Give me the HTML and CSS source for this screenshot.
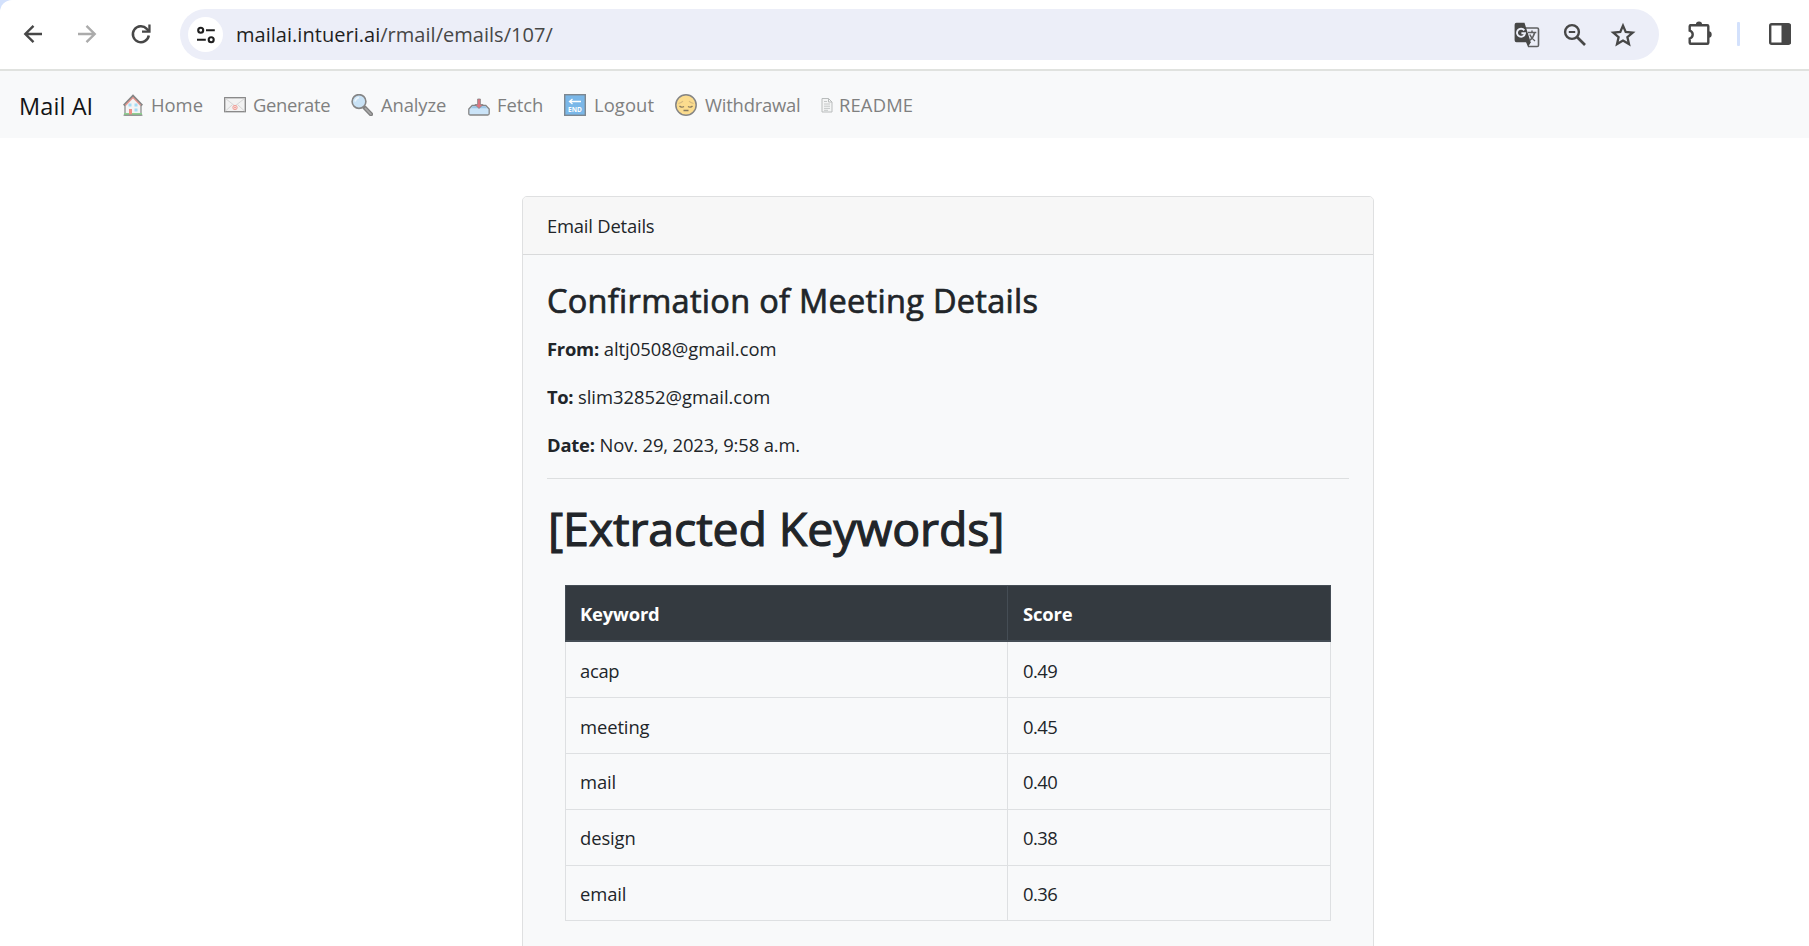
FILE: index.html
```
<!DOCTYPE html>
<html lang="en">
<head>
<meta charset="utf-8">
<title>Mail AI</title>
<link rel="stylesheet" href="styles.css">
</head>
<body>
<div class="frame">
<header class="toolbar">
  <div class="controls">
    <svg class="ctl" viewBox="0 0 24 24"><path d="M21 12H4.500M12.500 3.800L4.300 12l8.200 8.200" fill="none" stroke="#474747" stroke-width="2.400"/></svg>
    <svg class="ctl" viewBox="0 0 24 24"><path d="M3 12h16.500M11.500 3.800l8.200 8.200-8.200 8.200" fill="none" stroke="#ababab" stroke-width="2.400"/></svg>
    <svg class="ctl" viewBox="0 0 24 24"><path d="M19.800 13.500A8 8 0 1 1 17.800 6.800L20 9" fill="none" stroke="#474747" stroke-width="2.500"/><path d="M13 10.700h8.600V2.600h-2.300v5.800H13z" fill="#474747"/></svg>
  </div>
  <div class="omnibox">
    <span class="tune"><svg width="20" height="20" viewBox="0 0 20 20" fill="none" stroke="#1f1f1f" stroke-width="2.100"><circle cx="4.700" cy="5.200" r="2.500"/><path d="M10 5.200h8.800M1 14.800h8.800"/><circle cx="15.200" cy="14.800" r="2.500"/></svg></span>
    <span class="url"><span class="host">mailai.intueri.ai</span>/rmail/emails/107/</span>
    <span class="actions">
      <svg width="26" height="26" viewBox="0 0 26 26"><path d="M12 6h11.200q1.300 0 1.300 1.300v15.900q0 1.300-1.300 1.300H14" fill="none" stroke="#5f6062" stroke-width="1.600"/><path d="M2.500.8h8l6.200 19.400h-4.400H2.500Q.6 20.200.6 18.300V2.700Q.6.800 2.500.8z" fill="#474747"/><path d="M12 20h5l-3 5z" fill="#474747"/><path d="M10.300 8.400A4 4 0 1 0 11 11.300H7.400" fill="none" stroke="#eceef8" stroke-width="1.900"/><path d="M14 10.500h8.300M18 8.600v2M20.600 10.700q-1.200 5-5 7.800M15.800 12.500q1.500 3.800 5.200 6.500" fill="none" stroke="#5f6062" stroke-width="1.500"/></svg>
      <svg width="24" height="24" viewBox="0 0 24 24" fill="none" stroke="#474747" stroke-width="2.400"><circle cx="9" cy="9" r="6.900"/><path d="M5.800 9h6.400" stroke-width="2"/><path d="M14 14l8 8" stroke-width="2.700"/></svg>
      <svg width="26" height="26" viewBox="0 0 26 26"><path d="M13 3.600l2.700 6.400 7 .6-5.300 4.600 1.600 6.900-6-3.600-6 3.600 1.600-6.900-5.300-4.600 7-.6z" fill="none" stroke="#474747" stroke-width="2.300"/></svg>
    </span>
  </div>
  <div class="extras">
    <svg width="28" height="28" viewBox="0 0 28 28"><path d="M3.700 5.200h17.600q1 0 1 1v16.600q0 1-1 1H4.700q-1 0-1-1v-4.200q3-1 3-4t-3-4V6.200q0-1 1-1z" fill="none" stroke="#474747" stroke-width="2.400"/><path d="M9.900 4.500a3.100 3.100 0 0 1 6.200 0zM22.500 11.300a3.200 3.200 0 0 1 0 6.400z" fill="#474747"/></svg>
    <span class="divider"></span>
    <svg width="24" height="24" viewBox="0 0 24 24"><rect x="2.200" y="2.200" width="19.600" height="19.600" rx="1.500" fill="none" stroke="#474747" stroke-width="2.400"/><path d="M13.500 2h8q1.500 0 1.500 1.500v17q0 1.500-1.500 1.500h-8z" fill="#474747"/></svg>
  </div>
</header>
</div>

<nav class="navbar">
  <a class="brand">Mail AI</a>
  <a class="link home"><svg class="emoji" viewBox="0 0 22 22"><path d="M3 10.500l8-8 8 8V21H3z" fill="#f3f4f5" stroke="#858585" stroke-width="1.200"/><path d="M2 20h18" stroke="#8fce91" stroke-width="2"/><path d="M1.800 11.500L11 2l9.200 9.500" fill="none" stroke="#858585" stroke-width="2.400"/><path d="M3.500 11.200L11 3.600l7.500 7.600" fill="none" stroke="#ef9a92" stroke-width="1.300"/><path d="M6.500 9.500h3v3h-3zM12.500 9.500h3v3h-3zM12.500 14.500h3v3h-3z" fill="#a4dcf5"/><path d="M7 15h3v5.500H7z" fill="#f09086"/><path d="M1.500 21.200h19" stroke="#858585" stroke-width="1"/></svg>Home</a>
  <a class="link generate"><svg class="emoji" viewBox="0 0 22 22"><rect x=".7" y="3.700" width="20.600" height="14" fill="#f2f2f2" stroke="#858585" stroke-width="1.300"/><path d="M1.500 4.500L11 12l9.500-7.500M1.500 17l7-6.500M20.500 17l-7-6.500" fill="none" stroke="#d6d6d6"/><circle cx="11" cy="13.500" r="2.200" fill="#f8dcd9" stroke="#f0a29a" stroke-width="1"/><circle cx="11" cy="13.500" r=".8" fill="#ef8f86"/></svg>Generate</a>
  <a class="link analyze"><svg class="emoji" viewBox="0 0 22 22"><path d="M13.500 13.500l6.500 6.700" stroke="#808080" stroke-width="4.200" stroke-linecap="round"/><path d="M14.500 14.500l5.300 5.500" stroke="#a9a9a9" stroke-width="1.800" stroke-linecap="round"/><circle cx="8" cy="7.500" r="6.900" fill="#c9e2f5" stroke="#858585" stroke-width="1.600"/><path d="M4 7.500q.8-3.300 4-4" fill="none" stroke="#edf6fc" stroke-width="1.500"/></svg>Analyze</a>
  <a class="link fetch"><svg class="emoji" viewBox="0 0 22 22"><path d="M4.200 11.500h13.600l3.400 3.500v4.500q0 1.500-1.500 1.500H2.300q-1.500 0-1.500-1.500V15z" fill="#cbe4f8" stroke="#858585" stroke-width="1.300"/><path d="M4.700 12.200h12.600l1.700 2H3z" fill="#9cc7e8"/><path d="M9.600 5h2.800v5.500H15l-4 4-4-4h2.600z" fill="#df7480" stroke="#858585" stroke-width=".8"/></svg>Fetch</a>
  <a class="link logout"><svg class="emoji" viewBox="0 0 22 22"><rect x=".7" y=".7" width="20.600" height="20.600" fill="#7ab7e8" stroke="#7d8790" stroke-width="1.400"/><path d="M5.500 7.500H17M8.500 5l-3 2.500 3 2.500" fill="none" stroke="#fff" stroke-width="1.300"/><text class="end" x="11" y="18" text-anchor="middle">END</text></svg>Logout</a>
  <a class="link withdrawal"><svg class="emoji" viewBox="0 0 22 22"><circle cx="11" cy="11" r="10.200" fill="#fbdc8e" stroke="#858585" stroke-width="1.500"/><path d="M3.500 9.500q3-.5 4.500-2.300M18.500 9.500q-3-.5-4.500-2.300" fill="none" stroke="#d4b980" stroke-width="1.100"/><path d="M4.500 12q2 2 4.500.5M17.500 12q-2 2-4.500.5M8.500 16.500h5" fill="none" stroke="#85795f" stroke-width="1.400"/></svg>Withdrawal</a>
  <a class="link readme"><svg class="emoji page" viewBox="0 0 12 22"><path d="M1 4.500h6.500L11 8v10H1zM7.500 4.500V8H11" fill="#f4f5f5" stroke="#b9bcbc" stroke-width="1"/><path d="M3 7.500h3M3 10h6M3 12.200h6M3 14.400h6M3 16.300h4" stroke="#c0c3c3" stroke-width=".9"/></svg>README</a>
</nav>

<main class="card">
  <div class="card-header">Email Details</div>
  <div class="card-body">
    <h2 class="subject">Confirmation of Meeting Details</h2>
    <p class="meta"><strong class="from">From:</strong> <span>altj0508@gmail.com</span></p>
    <p class="meta"><strong class="to">To:</strong> <span>slim32852@gmail.com</span></p>
    <p class="meta"><strong class="date">Date:</strong> <span class="when">Nov. 29, 2023, 9:58 a.m.</span></p>
    <hr class="rule">
    <h1 class="title">[Extracted Keywords]</h1>
    <table class="keywords">
      <colgroup><col class="col-key"><col></colgroup>
      <thead><tr><th>Keyword</th><th>Score</th></tr></thead>
      <tbody>
        <tr><td class="acap">acap</td><td class="score">0.49</td></tr>
        <tr><td>meeting</td><td class="score">0.45</td></tr>
        <tr class="tight"><td>mail</td><td class="score">0.40</td></tr>
        <tr class="tight"><td>design</td><td class="score">0.38</td></tr>
        <tr class="tight"><td>email</td><td class="score">0.36</td></tr>
      </tbody>
    </table>
  </div>
</main>
</body>
</html>
```
FILE: styles.css
```
* { box-sizing: border-box; }
html { height: 100%; overflow: hidden; }
body {
  margin: 0;
  height: 100%;
  overflow: hidden;
  background: #fff;
  color: #212529;
  font: 18.4px/28.8px "Open Sans", "Noto Sans", sans-serif;
}
svg { display: block; flex: none; }

.frame { background: #d3e1fc; }
.toolbar {
  display: flex;
  align-items: center;
  height: 71px;
  padding: 0 17px 2px 21px;
  background: #fff;
  border-bottom: 2px solid #e0e2df;
  border-top-left-radius: 12px;
}
.controls { display: flex; gap: 30px; width: 159px; }
.ctl { width: 24px; height: 24px; }
.omnibox {
  display: flex;
  align-items: center;
  flex: none;
  width: 1479px;
  height: 51px;
  margin-top: 2px;
  padding: 0 23px 0 8px;
  border-radius: 26px;
  background: #eceef8;
}
.tune {
  display: grid;
  place-items: center;
  width: 35px;
  height: 35px;
  border-radius: 50%;
  background: #fff;
}
.url { margin-left: 13px; padding-top: 2px; font-size: 20px; letter-spacing: 0.03px; color: #474747; white-space: nowrap; }
.host { color: #1f1f1f; }
.actions { display: flex; align-items: center; gap: 23px; margin-left: auto; }
.extras { display: flex; align-items: center; margin-left: 27px; }
.divider { width: 3px; height: 24px; margin: 0 28px 0 23px; border-radius: 1px; background: #d3e1fc; }

.navbar {
  display: flex;
  align-items: center;
  height: 67px;
  padding-left: 19px;
  background: #f8f9fa;
  color: #7f8080;
}
.brand { width: 104px; padding-top: 3px; font-size: 23.5px; letter-spacing: 0.1px; color: #121416; }
.link { display: flex; align-items: center; gap: 6px; padding-top: 2px; white-space: nowrap; }
.emoji { width: 22px; height: 22px; }
.home .emoji { margin-left: -1px; }
.page { width: 12px; }
.end { font: 700 6.5px "Open Sans", sans-serif; fill: #fff; }
.home { width: 101px; gap: 7px; letter-spacing: 0; }
.generate { width: 127px; gap: 7px; letter-spacing: -0.35px; }
.analyze { width: 117px; gap: 8px; letter-spacing: -0.1px; }
.fetch { width: 96px; gap: 7px; letter-spacing: -0.05px; }
.logout { width: 111px; gap: 8px; letter-spacing: 0.1px; }
.withdrawal { width: 146px; gap: 8px; letter-spacing: -0.2px; }
.readme { letter-spacing: 0.15px; }

.card {
  width: 852px;
  height: 780px;
  margin: 58px 0 0 522px;
  border: 1px solid #dfe0e1;
  border-radius: 5px 5px 0 0;
  background: #f8f9fa;
}
.card-header {
  height: 58px;
  padding: 0 24px;
  line-height: 57px;
  letter-spacing: -0.2px;
  background: #f7f7f7;
  border-bottom: 1px solid #d9dadb;
  border-radius: 4px 4px 0 0;
}
.card-body { padding: 25px 24px 24px; }
.subject {
  margin: 0 0 12px;
  font-size: 32.5px;
  line-height: 42px;
  font-weight: 400;
  letter-spacing: 0.3px;
  -webkit-text-stroke: 0.7px #212529;
}
.meta { margin: 0 0 19px; line-height: 29px; }
.from { letter-spacing: -0.25px; }
.to { letter-spacing: -0.4px; }
.date { letter-spacing: -0.2px; }
.when { letter-spacing: -0.15px; }
.rule { height: 1px; margin: 0 0 21px; border: 0; background: #dddfe0; }
.title {
  margin: 0 0 29px;
  padding-left: 1px;
  font-size: 46.5px;
  line-height: 56px;
  font-weight: 400;
  letter-spacing: -0.13px;
  -webkit-text-stroke: 1.1px #212529;
}
.keywords {
  width: 766px;
  margin-left: 18px;
  table-layout: fixed;
  border-collapse: separate;
  border-spacing: 0;
  border-left: 1px solid #dee0e2;
}
.col-key { width: 442px; }
th, td {
  height: 56px;
  padding: 8px 14px 0;
  line-height: 41px;
  text-align: left;
  vertical-align: top;
  border-right: 1px solid #dee0e2;
  border-bottom: 1px solid #dee0e2;
}
th + th, td + td { padding-left: 15px; }
th {
  height: 57px;
  color: #fff;
  background: #343a40;
  border: solid #454d55;
  border-width: 1px 1px 2px 0;
  padding-top: 7px;
  letter-spacing: -0.15px;
}
th:first-child { box-shadow: -1px 0 #454d55; }
.tight td { padding-top: 7px; }
tr:last-child td { height: 55px; }
thead tr:last-child th { height: 57px; }
td { letter-spacing: -0.1px; }
.acap { letter-spacing: -0.3px; }
.score { letter-spacing: -0.5px; }
```
